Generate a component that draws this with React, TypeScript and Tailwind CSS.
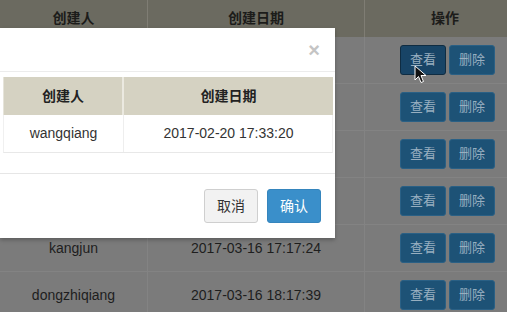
import React from 'react'

const FONT = "font-['Liberation_Sans','Noto_Sans_CJK_SC',sans-serif]"

// 前四行被弹窗遮住，只显示操作按钮
const bgRows = [
  { name: '', date: '' },
  { name: '', date: '' },
  { name: '', date: '' },
  { name: '', date: '' },
  { name: 'kangjun', date: '2017-03-16 17:17:24' },
  { name: 'dongzhiqiang', date: '2017-03-16 18:17:39' },
]

function Cursor() {
  return (
    <svg width="14" height="20" viewBox="0 0 14 20" className="absolute left-[414px] top-[65px]">
      <path d="M1 1 L1 15 L4.5 11.5 L7 17.5 L9.5 16.5 L7 10.5 L12 10.5 Z" fill="#111" stroke="#fff" strokeWidth="1" strokeLinejoin="round" />
    </svg>
  )
}

export default function App() {
  return (
    <div className={`relative w-[507px] h-[312px] overflow-hidden bg-[#7b7b7b] ${FONT}`}>
      {/* 背景表格 (已被遮罩压暗) */}
      <div className="grid grid-cols-[148px_217px_142px] h-[37px] bg-[#6b6a60] text-[14px] font-bold text-[#1c1c1a]">
        <div className="flex items-center justify-center border-r border-[#7f7d74]">创建人</div>
        <div className="flex items-center justify-center border-r border-[#7f7d74]">创建日期</div>
        <div className="flex items-center justify-center pl-[18px]">操作</div>
      </div>
      {bgRows.map((r, i) => (
        <div key={i} className="grid grid-cols-[148px_217px_142px] h-[47px] border-b border-[#838383] text-[14px] text-[#1e1e1e]">
          <div className="flex items-center justify-center border-r border-[#838383]">{r.name}</div>
          <div className="flex items-center justify-center border-r border-[#838383]">{r.date}</div>
          <div className="flex items-center gap-[3px] pl-[35px]">
            <button className={`w-[46px] h-[30px] rounded-[3px] text-[13px] text-[#98afc0] ${i === 0 ? 'bg-[#184466] border border-[#0f2c42]' : 'bg-[#1d5276] border border-[#2a6085]'}`}>查看</button>
            <button className="w-[46px] h-[30px] rounded-[3px] text-[13px] text-[#98afc0] bg-[#1d5276] border border-[#2a6085]">删除</button>
          </div>
        </div>
      ))}

      <Cursor />

      {/* 弹窗 */}
      <div className="absolute left-0 top-[28px] w-[335px] h-[210px] bg-white shadow-[0_2px_4px_rgba(0,0,0,0.25)] flex flex-col">
        <div className="h-[44px] border-b border-[#ececec] flex items-center justify-end pr-[15px]">
          <span className="text-[20px] font-bold leading-none text-[#c4c4c4]">×</span>
        </div>
        <div className="pt-[5px] pl-[3px] pr-[2px]">
          <div className="grid grid-cols-[120px_209px] h-[38px] bg-[#d5d2c2] text-[14px] font-bold text-[#222] border-l border-[#e6e4da]">
            <div className="flex items-center justify-center border-r-2 border-[#ebe9e0]">创建人</div>
            <div className="flex items-center justify-center">创建日期</div>
          </div>
          <div className="grid grid-cols-[120px_209px] h-[38px] text-[14px] text-[#333] border-b border-[#e8e8e8] border-l border-r border-l-[#f0f0f0] border-r-[#f0f0f0]">
            <div className="flex items-center justify-center border-r border-[#eeeeee]">wangqiang</div>
            <div className="flex items-center justify-center">2017-02-20 17:33:20</div>
          </div>
        </div>
        <div className="h-[21px] border-b border-[#e6e6e6]" />
        <div className="flex-1 flex items-start justify-end gap-[9px] pt-[15px] pr-[14px]">
          <button className="w-[54px] h-[34px] rounded-[3px] bg-[#f2f2f2] border border-[#cfcfcf] text-[14px] text-[#333]">取消</button>
          <button className="w-[54px] h-[34px] rounded-[3px] bg-[#3a8fca] border border-[#3585bd] text-[14px] text-white">确认</button>
        </div>
      </div>
    </div>
  )
}
